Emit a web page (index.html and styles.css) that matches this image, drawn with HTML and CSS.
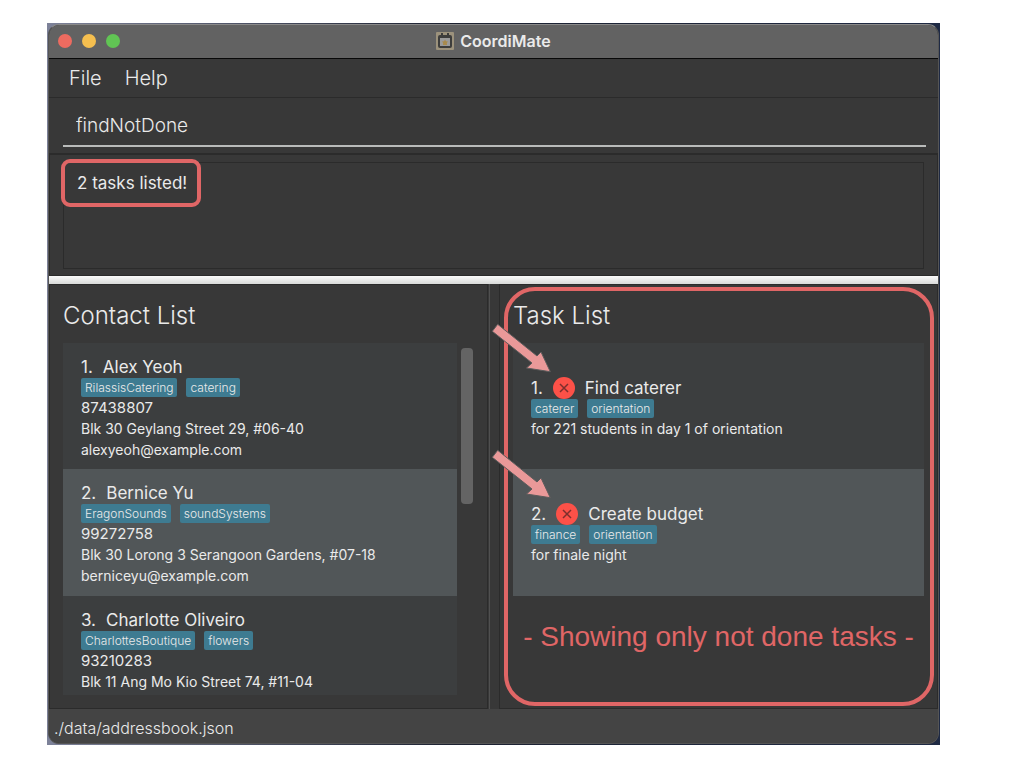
FILE: index.html
```html
<!DOCTYPE html>
<html lang="en">
<head>
<meta charset="utf-8">
<title>CoordiMate</title>
<link rel="stylesheet" href="styles.css">
</head>
<body>
<div class="desktop">
  <div class="window">
    <header class="titlebar">
      <div class="lights">
        <button class="light light-close" aria-label="Close"></button>
        <button class="light light-min" aria-label="Minimise"></button>
        <button class="light light-max" aria-label="Maximise"></button>
      </div>
      <h1 class="app-title">
        <svg class="app-icon" viewBox="0 0 18 18" aria-hidden="true">
          <rect width="18" height="18" rx="1" fill="#9c927c"/>
          <rect x="2" y="3" width="14" height="13" rx="2" fill="#3d3d3c"/>
          <rect x="5" y="1" width="2" height="3" fill="#3d3d3c"/>
          <rect x="11" y="1" width="2" height="3" fill="#3d3d3c"/>
          <rect x="4" y="6" width="10" height="8" fill="#9b9b9b"/>
          <path d="M9 7.500l1 1.800 2 .3-1.200 1.400.3 2.100H6.900l.3-2.100L6 9.600l2-.3z" fill="#a88a4c"/>
        </svg>
        CoordiMate
      </h1>
    </header>
    <nav class="menubar">
      <button class="menu">File</button>
      <button class="menu">Help</button>
    </nav>
    <div class="command">
      <input class="command-input" type="text" value="findNotDone" aria-label="Command">
    </div>
    <section class="result">
      <div class="result-box">
        <output class="result-text">2 tasks listed!</output>
        <div class="mark mark-result"></div>
      </div>
    </section>
    <div class="splitter"></div>
    <main class="panes">
      <section class="pane">
        <h2 class="pane-title">Contact List</h2>
        <div class="scroller">
          <ol class="list">
            <li class="card">
              <h3 class="name"><span>1.</span><span>Alex Yeoh</span></h3>
              <div class="tags"><span class="tag">RilassisCatering</span><span class="tag">catering</span></div>
              <p class="line phone">87438807</p>
              <p class="line">Blk 30 Geylang Street 29, #06-40</p>
              <p class="line">alexyeoh@example.com</p>
            </li>
            <li class="card card-alt">
              <h3 class="name"><span>2.</span><span>Bernice Yu</span></h3>
              <div class="tags"><span class="tag">EragonSounds</span><span class="tag">soundSystems</span></div>
              <p class="line phone">99272758</p>
              <p class="line">Blk 30 Lorong 3 Serangoon Gardens, #07-18</p>
              <p class="line">berniceyu@example.com</p>
            </li>
            <li class="card">
              <h3 class="name"><span>3.</span><span>Charlotte Oliveiro</span></h3>
              <div class="tags"><span class="tag">CharlottesBoutique</span><span class="tag">flowers</span></div>
              <p class="line phone">93210283</p>
              <p class="line">Blk 11 Ang Mo Kio Street 74, #11-04</p>
              <p class="line">charlotte@example.com</p>
            </li>
          </ol>
          <div class="track"><div class="thumb"></div></div>
        </div>
      </section>
      <div class="divider"></div>
      <section class="pane">
        <div class="mark mark-pane"></div>
        <h2 class="pane-title">Task List</h2>
        <ol class="tasks">
          <li class="card">
            <h3 class="name"><span>1.</span>
              <svg class="cross" viewBox="0 0 22 22" role="img" aria-label="Not done"><circle cx="11" cy="11" r="11" fill="#fc5148"/><path d="M7 7l8 8M15 7l-8 8" stroke="#7c2f2c" stroke-width="1.500"/></svg>
              <span>Find caterer</span></h3>
            <div class="tags"><span class="tag">caterer</span><span class="tag">orientation</span></div>
            <p class="line">for 221 students in day 1 of orientation</p>
            <svg class="arrow" viewBox="0 0 62 52" aria-hidden="true"><path d="M6.700 2.300L1.300 9.300 41 41 35.500 46 59.300 49.700 50 30 46 34z"/></svg>
          </li>
          <li class="card card-alt">
            <h3 class="name"><span>2.</span>
              <svg class="cross" viewBox="0 0 22 22" role="img" aria-label="Not done"><circle cx="11" cy="11" r="11" fill="#fc5148"/><path d="M7 7l8 8M15 7l-8 8" stroke="#7c2f2c" stroke-width="1.500"/></svg>
              <span>Create budget</span></h3>
            <div class="tags"><span class="tag">finance</span><span class="tag">orientation</span></div>
            <p class="line">for finale night</p>
            <svg class="arrow" viewBox="0 0 62 52" aria-hidden="true"><path d="M6.700 2.300L1.300 9.300 41 41 35.500 46 59.300 49.700 50 30 46 34z"/></svg>
          </li>
        </ol>
        <p class="caption">- Showing only not done tasks -</p>
      </section>
    </main>
    <footer class="status">./data/addressbook.json</footer>
  </div>
</div>
</body>
</html>
```
FILE: styles.css
```css
* { box-sizing: border-box; }

body {
  margin: 0;
  height: 100vh;
  padding: 23px 84px 23px 47px;
  background: #fff;
  color: #eaeaea;
  font-family: Inter, "Liberation Sans", sans-serif;
  font-weight: 300;
}

h1, h2, h3, p, ol { margin: 0; padding: 0; font-weight: inherit; }
ol { list-style: none; }
button, input { font: inherit; color: inherit; background: none; border: 0; padding: 0; }

.desktop {
  height: 100%;
  padding: 1px;
  background: linear-gradient(to right, #7d8299, #1c2130 45%, #1f2a44);
}

.window {
  display: flex;
  flex-direction: column;
  height: 100%;
  overflow: hidden;
  border: 1px solid #555;
  border-top-color: #8a8a8a;
  border-radius: 11px;
  background: #383838;
}

.titlebar {
  display: grid;
  grid-template-columns: 1fr auto 1fr;
  align-items: center;
  height: 34px;
  padding: 0 9px 2px;
  background: #626262;
  border-bottom: 1px solid #080808;
}
.lights { display: flex; gap: 10px; }
.light { width: 14px; height: 14px; border-radius: 50%; }
.light-close { background: #ed6b60; }
.light-min { background: #f5bf4f; }
.light-max { background: #61c554; }
.app-title { display: flex; align-items: center; gap: 6px; font-size: 16px; line-height: 20px; font-weight: 600; }
.app-icon { width: 18px; height: 18px; }

.menubar {
  display: flex;
  gap: 23px;
  height: 39px;
  padding: 0 20px;
  border-bottom: 1px solid #2b2b2b;
}
.menu { font-size: 20px; }

.command { height: 55px; padding: 7px 12px 6px 14px; }
.command-input {
  width: 100%;
  height: 42px;
  padding: 0 13px;
  border-bottom: 2px solid #b9bbba;
  font-size: 19px;
  outline: none;
}

.result {
  height: 123px;
  padding: 7px 13px 6px;
  border: 1px solid #2b2b2b;
  border-top-width: 2px;
}
.result-box {
  position: relative;
  height: 107px;
  padding: 7px 13px;
  border: 1px solid #2b2b2b;
}
.result-text { font-size: 17px; font-weight: 400; line-height: 26px; }

.mark { position: absolute; border: 4px solid #e06666; pointer-events: none; }
.mark-result { left: -3px; top: -4px; width: 140px; height: 48px; border-radius: 9px; }
.mark-pane { inset: 2px 3px 2px 4px; border-radius: 31px; }

.splitter { height: 8px; background: linear-gradient(#fafafa, #d9dad9); }

.panes {
  display: grid;
  grid-template-columns: 1fr 11px 1fr;
  flex: 1;
  min-height: 0;
}
.pane {
  position: relative;
  display: flex;
  flex-direction: column;
  min-width: 0;
  min-height: 0;
  padding: 11px 13px 13px;
  border: 1px solid #2b2b2b;
}
.divider { border-left: 1px solid #505050; margin-left: 1px; }
.pane-title { height: 47px; font-size: 24px; line-height: 39px; }

.scroller { display: flex; flex: 1; min-height: 0; gap: 4px; }
.list { flex: 1; overflow: hidden; }
.track { width: 12px; margin-right: 1px; padding-top: 5px; }
.thumb { height: 156px; border-radius: 4px; background: #646464; }

.card {
  position: relative;
  display: flex;
  flex-direction: column;
  justify-content: center;
  height: 126px;
  padding: 3px 18px 0;
  background: #3c3e3f;
}
.card-alt { background: #515658; height: 127px; }
.name { display: flex; align-items: center; gap: 10px; font-size: 17px; font-weight: 400; line-height: 22px; }
.cross { width: 22px; height: 22px; }
.tags { display: flex; gap: 9px; }
.tag {
  padding: 0 4px;
  border-radius: 2px;
  background: #3e7b91;
  font-size: 12px;
  line-height: 19px;
}
.line { font-size: 14px; font-weight: 400; line-height: 21px; white-space: nowrap; }
.phone { font-size: 15px; }

.arrow { position: absolute; left: -22px; top: -21px; width: 62px; height: 52px; }
.arrow path { fill: #ea9999; stroke: #5c5c5c; stroke-width: 1; }

.caption {
  margin: 24px 7px 0;
  color: #e06666;
  font-family: "Liberation Sans", sans-serif;
  font-size: 28px;
  font-weight: 400;
  line-height: 34px;
  text-align: center;
  white-space: nowrap;
}

.status {
  height: 34px;
  padding: 0 5px;
  background: #444;
  font-size: 16px;
  line-height: 38px;
}
```
